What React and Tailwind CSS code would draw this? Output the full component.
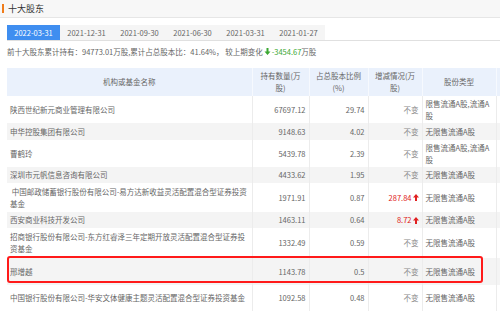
import React from 'react'

const tabs = ['2022-03-31', '2021-12-31', '2021-09-30', '2021-06-30', '2021-03-31', '2021-01-27']

const rows = [
  { name: '陕西世纪新元商业管理有限公司', qty: '67697.12', pct: '29.74', chg: '不变', type: '限售流通A股,流通A股', h: 'h-[27px]' },
  { name: '申华控股集团有限公司', qty: '9148.63', pct: '4.02', chg: '不变', type: '无限售流通A股', h: 'h-[17px]' },
  { name: '曹鹤玲', qty: '5439.78', pct: '2.39', chg: '不变', type: '限售流通A股,流通A股', h: 'h-[27px]' },
  { name: '深圳市元帆信息咨询有限公司', qty: '4433.62', pct: '1.95', chg: '不变', type: '无限售流通A股', h: 'h-[16px]' },
  { name: ' 中国邮政储蓄银行股份有限公司-易方达新收益灵活配置混合型证券投资基金', qty: '1971.91', pct: '0.87', chg: '287.84', up: true, type: '无限售流通A股', h: 'h-[29px]' },
  { name: '西安商业科技开发公司', qty: '1463.11', pct: '0.64', chg: '8.72', up: true, type: '无限售流通A股', h: 'h-[16px]' },
  { name: '招商银行股份有限公司-东方红睿泽三年定期开放灵活配置混合型证券投资基金', qty: '1332.49', pct: '0.59', chg: '不变', type: '无限售流通A股', h: 'h-[30px]' },
  { name: '邢增越', qty: '1143.78', pct: '0.5', chg: '不变', type: '无限售流通A股', h: 'h-[27px]' },
  { name: '中国银行股份有限公司-华安文体健康主题灵活配置混合型证券投资基金', qty: '1092.58', pct: '0.48', chg: '不变', type: '无限售流通A股', h: 'h-[26px]' },
]

const UpArrow = () => (
  <svg width="6" height="7" viewBox="0 0 6 7" className="inline-block ml-[1px] -mt-[1px]">
    <path d="M3 0 6 3.4H4V7H2V3.4H0Z" fill="#e02020" />
  </svg>
)

const DownArrow = () => (
  <svg width="7" height="7" viewBox="0 0 6 7" className="inline-block mx-[1px] -mt-[1px]">
    <path d="M3 7 6 3.6H4V0H2V3.6H0Z" fill="#3aa832" />
  </svg>
)

export default function App() {
  return (
    <div className="w-[500px] h-[311px] overflow-hidden bg-white text-[#666] text-[7.5px] leading-[12px]" style={{ fontFamily: '"Noto Sans CJK SC", "Noto Sans", sans-serif' }}>
      {/* title */}
      <div className="h-[18px] bg-[#f7f7f7] border-b border-[#e6e6e6] flex items-center">
        <span className="w-[2px] h-[9px] bg-[#f07c1a] ml-[2px] mr-[4px]" />
        <span className="text-[9px] text-[#333]">十大股东</span>
      </div>

      {/* tabs */}
      <div className="mt-[7px] ml-[7px] flex h-[16px] border-b border-[#e0e0e0]">
        <div className="flex bg-[#f5f5f5]">
          {tabs.map((t, i) => (
            <div key={t} className={`w-[53px] flex items-center justify-center ${i === 0 ? 'bg-[#3f8ef0] text-white' : 'text-[#666]'}`}>
              {t}
            </div>
          ))}
        </div>
      </div>

      {/* summary */}
      <div className="ml-[7px] mt-[5px] h-[12px] flex items-center">
        前十大股东累计持有：94773.01万股,累计占总股本比：41.64%， 较上期变化<DownArrow /><span className="text-[#3aa832]">-3454.67</span>万股
      </div>

      {/* table */}
      <div className="ml-[7px] mt-[10px] relative">
        <table className="table-fixed border-collapse w-[520px]">
          <colgroup>
            <col className="w-[245px]" />
            <col className="w-[57px]" />
            <col className="w-[59px]" />
            <col className="w-[54px]" />
            <col className="w-[74px]" />
            <col />
          </colgroup>
          <thead>
            <tr className="h-[28px] bg-[#eaf1fc]">
              <th className="font-normal text-center border-r border-[#f6f9fe]">机构或基金名称</th>
              <th className="font-normal text-center border-r border-[#f6f9fe] px-[2px]">持有数量(万<br />股)</th>
              <th className="font-normal text-center border-r border-[#f6f9fe]">占总股本比例<br />(%)</th>
              <th className="font-normal text-center border-r border-[#f6f9fe] px-[2px]">增减情况(万<br />股)</th>
              <th className="font-normal text-center border-r border-[#f6f9fe]">股份类型</th>
              <th className="font-normal"></th>
            </tr>
          </thead>
          <tbody>
            {rows.map((r, i) => (
              <tr key={i} className={`${r.h} ${i % 2 === 1 ? 'bg-[#f4f4f4]' : 'bg-white'}`}>
                <td className="px-[3px] border-r border-[#ececec] whitespace-pre-wrap">{r.name}</td>
                <td className="px-[3px] text-right border-r border-[#ececec]">{r.qty}</td>
                <td className="px-[3px] text-right border-r border-[#ececec]">{r.pct}</td>
                <td className="px-[3px] text-right border-r border-[#ececec]">
                  {r.up ? <span className="text-[#e02020]">{r.chg}<UpArrow /></span> : <span className="text-[#888]">{r.chg}</span>}
                </td>
                <td className="px-[3px] border-r border-[#ececec]">{r.type}</td>
                <td></td>
              </tr>
            ))}
          </tbody>
        </table>
        {/* highlight box over 邢增越 row */}
        <div className="absolute left-0 top-[188px] w-[476px] h-[27px] border-2 border-[#ff1a1a] rounded-[3px] pointer-events-none" />
      </div>
    </div>
  )
}
